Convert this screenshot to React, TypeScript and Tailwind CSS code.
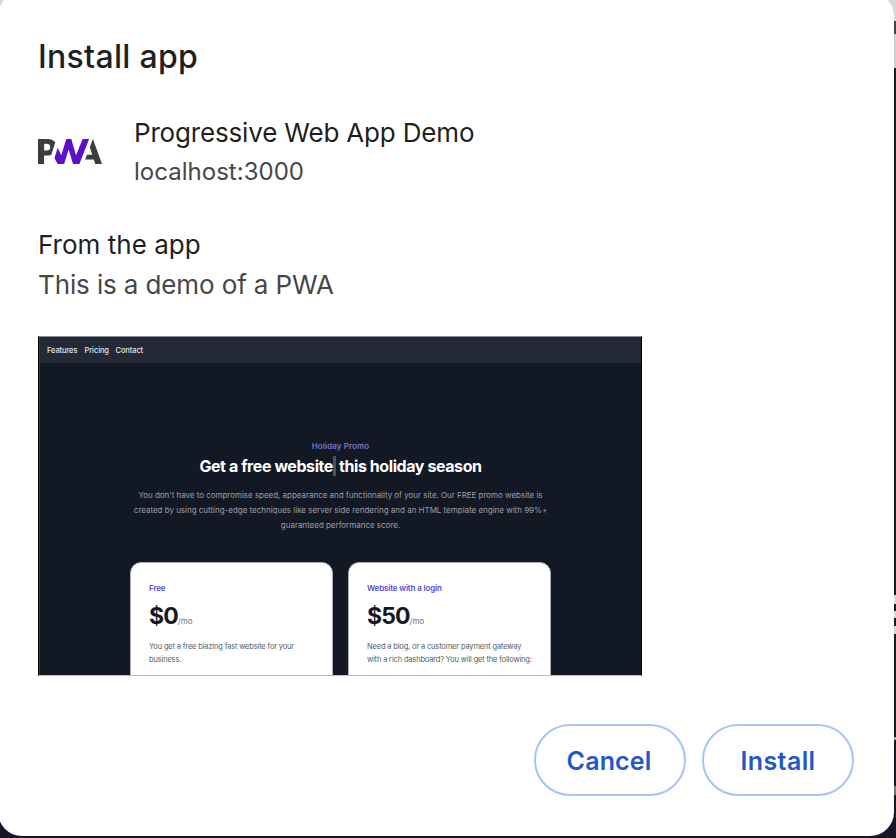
function PwaLogo() {
  return (
    <svg viewBox="0 0 1952 735" className="mb-px h-[25px] w-16" preserveAspectRatio="none" aria-label="PWA">
      <path fill="#3d3d3d" d="M1436.62 603.304L1493.01 460.705H1655.83L1578.56 244.39L1675.2 0L1952 734.933H1747.87L1700.57 603.304H1436.62Z" />
      <path fill="#5a0fc8" d="M1262.47 734.935L1558.79 0L1362.34 0L1159.64 474.933L1015.5 0H864.499L709.731 474.933L600.585 258.517L501.812 562.819L602.096 734.935H795.427L935.284 309.025L1068.63 734.935H1262.47Z" />
      <path fill="#3d3d3d" d="M186.476 482.643H307.479C344.133 482.643 376.772 478.552 405.396 470.37L436.689 373.962L524.148 104.516C517.484 93.954 509.876 83.967 501.324 74.557C456.419 24.852 390.719 0 304.222 0H0V734.933H186.476V482.643ZM346.642 169.079C364.182 186.732 372.951 210.355 372.951 239.95C372.951 269.772 365.238 293.424 349.813 310.906C332.903 330.331 301.766 340.043 256.404 340.043H186.476V142.598H256.918C299.195 142.598 329.103 151.425 346.642 169.079Z" />
    </svg>
  );
}

function Preview() {
  return (
    <div className="mt-[31px] h-[340px] w-[604px] overflow-hidden border-x border-black border-t border-t-[#8b8e95] border-b border-b-[#b9bbc0] bg-[#131924]">
      <div className="h-full border-l border-[#343a45] whitespace-nowrap">
        <nav className="flex h-[26px] items-center gap-[7px] bg-[#242a35] pt-px pl-[7px] text-[7.5px] font-medium text-[#e4e5e8]">
          <span className="w-[30.5px] tracking-[-0.1px]">Features</span>
          <span className="w-6 tracking-[-0.1px]">Pricing</span>
          <span className="tracking-[-0.1px]">Contact</span>
        </nav>
        <div className="flex flex-col items-center pt-[77px]">
          <p className="text-[8px] leading-[12px] font-semibold tracking-[0.08px] text-[#7274d0]">Holiday Promo</p>
          <h2 className="mt-1 flex text-[16px] leading-[21px] font-bold tracking-[-0.42px] text-white">
            <span>Get a free website</span>
            <span className="mr-[3px] h-5 w-[3px] bg-[#4b515d]" />
            <span>this holiday season</span>
          </h2>
          <div className="mt-[11px] text-center text-[8px] leading-[15px] tracking-[-0.018px] text-[#9b9fa8]">
            <p className="tracking-[-0.028px]">You don't have to compromise speed, appearance and functionality of your site. Our FREE promo website is</p>
            <p>created by using cutting-edge techniques like server side rendering and an HTML template engine with 99%+</p>
            <p>guaranteed performance score.</p>
          </div>
        </div>
        <div className="mt-[29px] flex gap-[15px] pl-[90px]">
          <Plan name="Free" price="$0" lines={["You get a free blazing fast website for your", "business."]} />
          <Plan name="Website with a login" price="$50" lines={["Need a blog, or a customer payment gateway", "with a rich dashboard? You will get the following:"]} />
        </div>
      </div>
    </div>
  );
}

function Plan({ name, price, lines }: { name: string; price: string; lines: string[] }) {
  return (
    <div className="h-[120px] w-[203px] rounded-t-[11px] border border-[#a9adb5] bg-white pt-[19px] pl-[18px]">
      <p className="text-[8px] leading-[12px] font-semibold tracking-[-0.14px] text-[#554bdd]">{name}</p>
      <p className="mt-[8px] flex items-baseline leading-[28px]">
        <span className="text-[23px] font-bold tracking-[-0.9px] text-[#131924]">{price}</span>
        <span className="text-[8px] text-[#6b7280]">/mo</span>
      </p>
      <div className="mt-[5px] text-[7.5px] leading-[13px] tracking-[-0.165px] text-[#555c68]">
        {lines.map((line) => <p key={line}>{line}</p>)}
      </div>
    </div>
  );
}

export default function App() {
  return (
    <div className="flex h-[838px] w-[896px] overflow-hidden bg-[linear-gradient(to_bottom,#d8d8d8_0_21px,#444_21px_34px,#cfd0cd_34px_68px,#191b2b_68px_595px,#d9d9d9_595px_604px,#191b2b_604px_611px,#d9d9d9_611px_618px,#191b2b_618px_626px,#d9d9d9_626px_634px,#191b2b_634px_737px,#aaa_737px_740px,#191528_740px_786px,#777_786px_795px,#191528_795px)] font-['Inter','Liberation_Sans',sans-serif]">
      <main className="-mt-2 -ml-[2px] flex h-[844px] w-[896px] shrink-0 flex-col rounded-[24px] bg-white pt-[45px] pl-10 whitespace-nowrap text-[#1f1f1f]">
        <h1 className="text-[32px] leading-10 font-medium tracking-[0.3px]">Install app</h1>
        <div className="mt-[36px] flex items-center gap-8">
          <PwaLogo />
          <div>
            <p className="text-[26px] leading-10 tracking-[-0.17px]">Progressive Web App Demo</p>
            <p className="text-[24px] leading-[38px] tracking-[0.02px] text-[#474747]">localhost:3000</p>
          </div>
        </div>
        <p className="mt-[34px] text-[26px] leading-10 tracking-[0.02px]">From the app</p>
        <p className="text-[26px] leading-10 tracking-[-0.12px] text-[#474747]">This is a demo of a PWA</p>
        <Preview />
        <div className="mt-12 flex gap-4 pl-[496px]">
          <button className="h-[72px] w-[152px] rounded-full border-2 border-[#a8c3f8] pt-[3px] pr-[2px] text-[25px] font-semibold tracking-[0.15px] text-[#2458c9]">Cancel</button>
          <button className="h-[72px] w-[152px] rounded-full border-2 border-[#a8c3f8] pt-[3px] text-[25px] font-semibold tracking-[0.4px] text-[#2458c9]">Install</button>
        </div>
      </main>
    </div>
  );
}
